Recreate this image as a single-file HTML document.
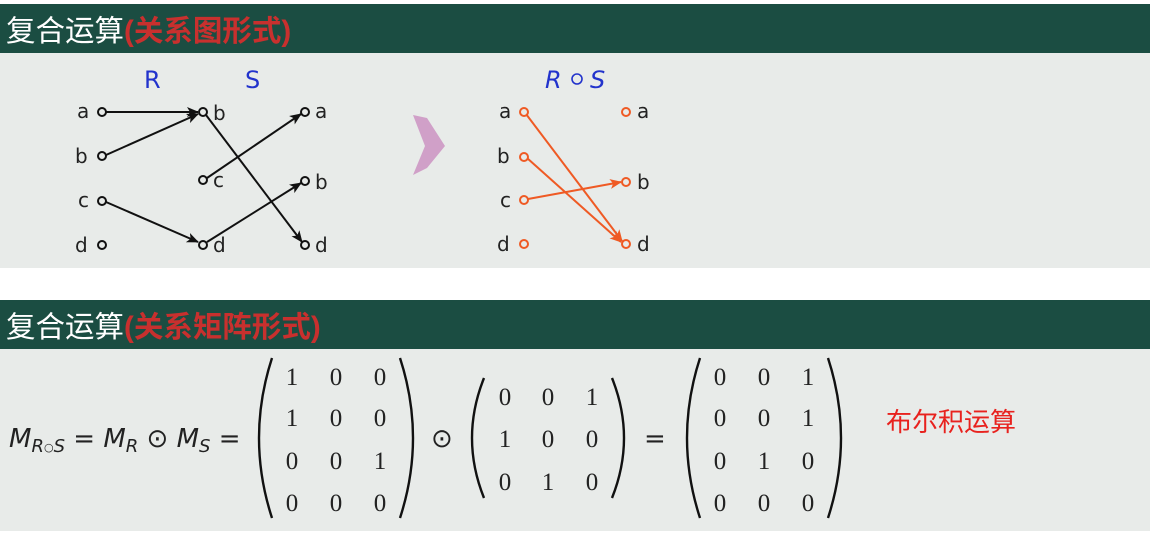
<!DOCTYPE html>
<html><head><meta charset="utf-8"><style>
html,body{margin:0;padding:0;background:#fff;width:1154px;height:544px;overflow:hidden}
svg{display:block}
.t{font-family:"Liberation Sans","Noto Sans CJK SC",sans-serif}
.lb{font-family:"DejaVu Sans","Liberation Sans",sans-serif;font-size:20px;fill:#222}
.m{font-family:"Liberation Serif","DejaVu Serif",serif;font-size:25px;fill:#222}
</style></head><body>
<svg width="1154" height="544" viewBox="0 0 1154 544" xmlns="http://www.w3.org/2000/svg">
<defs>
<marker id="ak" markerWidth="12" markerHeight="10" refX="11" refY="5" orient="auto" markerUnits="userSpaceOnUse"><path d="M0,0 L12,5 L0,10 L3,5 Z" fill="#111"/></marker>
<marker id="ao" markerWidth="12" markerHeight="10" refX="11" refY="5" orient="auto" markerUnits="userSpaceOnUse"><path d="M0,0 L12,5 L0,10 L3,5 Z" fill="#ef5a24"/></marker>
</defs>
<rect x="0" y="4" width="1150" height="49" fill="#1b4d42"/>
<rect x="0" y="53" width="1150" height="215" fill="#e8ebe9"/>
<rect x="0" y="300" width="1150" height="49" fill="#1b4d42"/>
<rect x="0" y="349" width="1150" height="182" fill="#e8ebe9"/>
<text class="t" x="6" y="41" font-size="29.5" fill="#fff">复合运算<tspan fill="#c8302e" font-weight="bold">(关系图形式)</tspan></text>
<text class="t" x="6" y="337" font-size="29.5" fill="#fff">复合运算<tspan fill="#c8302e" font-weight="bold">(关系矩阵形式)</tspan></text>

<text class="lb" x="144" y="88" style="fill:#2233cc;font-size:24px">R</text>
<text class="lb" x="245" y="88" style="fill:#2233cc;font-size:24px">S</text>
<g stroke="#111" stroke-width="2" fill="none">
<line x1="106" y1="112" x2="198" y2="112" marker-end="url(#ak)"/>
<line x1="106" y1="155" x2="198" y2="114" marker-end="url(#ak)"/>
<line x1="106" y1="202" x2="198" y2="242" marker-end="url(#ak)"/>
<line x1="206" y1="115" x2="302" y2="242" marker-end="url(#ak)"/>
<line x1="207" y1="178" x2="301" y2="114" marker-end="url(#ak)"/>
<line x1="207" y1="242" x2="301" y2="183" marker-end="url(#ak)"/>
</g>
<g stroke="#111" stroke-width="2" fill="#e8ebe9">
<circle cx="102" cy="112" r="4"/><circle cx="102" cy="156" r="4"/><circle cx="102" cy="201" r="4"/><circle cx="102" cy="245" r="4"/>
<circle cx="203" cy="112" r="4"/><circle cx="203" cy="180" r="4"/><circle cx="203" cy="245" r="4"/>
<circle cx="305" cy="112" r="4"/><circle cx="305" cy="181" r="4"/><circle cx="305" cy="245" r="4"/>
</g>
<text class="lb" x="77" y="118">a</text><text class="lb" x="75" y="163">b</text><text class="lb" x="78" y="207">c</text><text class="lb" x="75" y="252">d</text>
<text class="lb" x="213" y="120">b</text><text class="lb" x="213" y="187">c</text><text class="lb" x="213" y="252">d</text>
<text class="lb" x="315" y="118">a</text><text class="lb" x="315" y="189">b</text><text class="lb" x="315" y="252">d</text>

<path d="M413,115 L427,118 L445,146 L427,168 L413,175 L425,146 Z" fill="#d0a0c8"/>

<text class="lb" x="545" y="88" style="fill:#2233cc;font-size:24px;font-style:italic">R</text>
<circle cx="577" cy="79" r="5" fill="none" stroke="#2233cc" stroke-width="1.6"/>
<text class="lb" x="590" y="88" style="fill:#2233cc;font-size:24px;font-style:italic">S</text>
<g stroke="#ef5a24" stroke-width="2" fill="none">
<line x1="526" y1="114" x2="622" y2="241" marker-end="url(#ao)"/>
<line x1="527" y1="158" x2="621" y2="242" marker-end="url(#ao)"/>
<line x1="528" y1="199" x2="621" y2="182" marker-end="url(#ao)"/>
</g>
<g stroke="#ef5a24" stroke-width="2" fill="#e8ebe9">
<circle cx="524" cy="112" r="4"/><circle cx="524" cy="157" r="4"/><circle cx="524" cy="200" r="4"/><circle cx="524" cy="244" r="4"/>
<circle cx="626" cy="112" r="4"/><circle cx="626" cy="182" r="4"/><circle cx="626" cy="244" r="4"/>
</g>
<text class="lb" x="499" y="118">a</text><text class="lb" x="497" y="163">b</text><text class="lb" x="500" y="207">c</text><text class="lb" x="497" y="251">d</text>
<text class="lb" x="637" y="118">a</text><text class="lb" x="637" y="189">b</text><text class="lb" x="637" y="251">d</text>

<text class="lb" x="9" y="447" style="font-size:26px;font-style:italic">M<tspan font-size="18" dy="5">R</tspan><tspan font-size="11" dy="-1" font-style="normal">○</tspan><tspan font-size="18" dy="1">S</tspan><tspan dy="-5" font-style="normal"> = </tspan>M<tspan font-size="18" dy="5">R</tspan><tspan dy="-5" font-style="normal"> ⊙ </tspan>M<tspan font-size="18" dy="5">S</tspan><tspan dy="-5" font-style="normal"> =</tspan></text>

<g fill="none" stroke="#111" stroke-width="2.4">
<path d="M272,358 Q246,438 272,518"/><path d="M400,358 Q426,438 400,518"/>
<path d="M484,378 Q460,438 484,498"/><path d="M612,378 Q636,438 612,498"/>
<path d="M700,358 Q674,438 700,518"/><path d="M828,358 Q854,438 828,518"/>
</g>
<g class="m" text-anchor="middle">
<text x="292" y="385">1</text><text x="336" y="385">0</text><text x="380" y="385">0</text>
<text x="292" y="426">1</text><text x="336" y="426">0</text><text x="380" y="426">0</text>
<text x="292" y="469">0</text><text x="336" y="469">0</text><text x="380" y="469">1</text>
<text x="292" y="511">0</text><text x="336" y="511">0</text><text x="380" y="511">0</text>
<text x="505" y="405">0</text><text x="548" y="405">0</text><text x="592" y="405">1</text>
<text x="505" y="447">1</text><text x="548" y="447">0</text><text x="592" y="447">0</text>
<text x="505" y="490">0</text><text x="548" y="490">1</text><text x="592" y="490">0</text>
<text x="720" y="385">0</text><text x="764" y="385">0</text><text x="808" y="385">1</text>
<text x="720" y="426">0</text><text x="764" y="426">0</text><text x="808" y="426">1</text>
<text x="720" y="469">0</text><text x="764" y="469">1</text><text x="808" y="469">0</text>
<text x="720" y="511">0</text><text x="764" y="511">0</text><text x="808" y="511">0</text>
</g>
<text class="lb" x="431" y="447" style="font-size:26px">⊙</text>
<text class="lb" x="644" y="447" style="font-size:26px">=</text>
<text class="t" x="886" y="431" font-size="26" fill="#e8221e">布尔积运算</text>
</svg>
</body></html>
